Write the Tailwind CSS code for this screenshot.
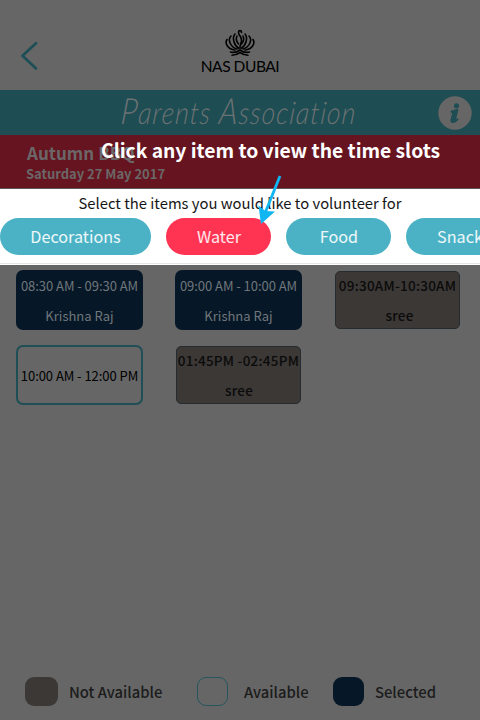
<!DOCTYPE html>
<html lang="en">
<head>
<meta charset="utf-8">
<title>Parents Association</title>
<script src="https://cdn.jsdelivr.net/npm/@tailwindcss/browser@4"></script>
</head>
<body class="relative flex h-[720px] w-[480px] flex-col overflow-hidden bg-[#666666] font-['Noto_Sans_CJK_SC','Open_Sans',sans-serif] whitespace-nowrap">
  <header class="grid h-[90px] shrink-0 grid-cols-[1fr_80px_1fr] text-black">
    <svg class="mt-[41px] ml-5 h-[30px] w-5" viewBox="0 0 20 30" fill="none" stroke="#1e4f56" stroke-width="2.8" stroke-linecap="round" stroke-linejoin="round"><path d="M16 2.2 2.5 14.7 16 27.4"/></svg>
    <div class="flex flex-col items-center pt-[29px]">
      <!-- lotus crest -->
      <svg class="h-[28px] w-[32px] shrink-0" viewBox="0 0 32 28" fill="none" stroke="#000" stroke-width="1.6" stroke-linecap="round">
        <path d="M17.5 3.500c0-2.500-3-2.500-3 0 0 3 3.500 4 3 8-.3 3-1.500 4-1.500 7"/>
        <path d="M13 7c-1.500 3-1 5 1.500 8M19 7c1.500 3 1 5-1.500 8"/>
        <path d="M15 19.500C9.500 16 8 8.500 11 5M17 19.500c5.500-3.500 7-11 4-14.500"/>
        <path d="M13 20C6 18 3.500 10.500 7 7M19 20c7-2 9.500-9.500 6-13"/>
        <path d="M11 21C4 20.500.5 14.500 3 10.500M21 21c7-.5 10.500-6.500 8-10.500"/>
        <path d="M6.500 23c4 1.200 7-.3 9.500-2 2.500 1.700 5.500 3.200 9.500 2M8 26.300c4 0 5.500-1 8-2.800 2.500 1.800 4 2.800 8 2.800"/>
      </svg>
      <div class="text-[15.5px] leading-[18px] font-['Lato','Noto_Sans_CJK_SC',sans-serif] tracking-[-0.45px]">NAS DUBAI</div>
    </div>
  </header>

  <div class="grid h-[45px] shrink-0 grid-cols-[1fr_260px_1fr] items-center bg-[#1e4d53] text-[#6c7273]">
    <span></span>
    <h1 class="-mt-1 -ml-[9px] origin-center scale-x-[0.85] -skew-x-6 text-center font-['Lato',sans-serif] text-[31px] leading-[40px] font-light tracking-[1.3px] italic [font-variant-ligatures:none]"><span class="text-[36px]">P</span>arents <span class="text-[36px]">A</span>ssociation</h1>
    <svg class="mr-2 h-[34px] w-[34px] justify-self-end" viewBox="0 0 34 34"><circle cx="17" cy="17" r="16.7" fill="#666"/><circle cx="18.5" cy="9.8" r="2.6" fill="#1e4d53"/><path d="M13 15.200c2-.8 4-1.400 7-1.700l-2.400 9.600c-.2 1 .6.7 2-.5l.6.8c-2.600 2.800-4.600 3.600-6.300 3-1.300-.5-1.200-1.800-.8-3.300l1.800-6.400c-.6-.4-1.200-.4-2-.5z" fill="#1e4d53" stroke="#1e4d53" stroke-width="1"/></svg>
  </div>

  <section class="h-[54px] shrink-0 border-b border-[#5d5555] bg-[#66141f] pl-[26px] font-bold text-[#6b6768]">
    <h2 class="pt-[6px] pl-px text-[17px] leading-[24px] tracking-[0.05px]">Autumn BBQ</h2>
    <p class="text-[13px] leading-[18px] tracking-[-0.02px]">Saturday 27 May 2017</p>
  </section>

  <section class="flex h-[76px] shrink-0 flex-col bg-white">
    <p class="h-[29px] pt-[3px] text-center text-[14.8px] leading-[22px] text-[#161616]">Select the items you would like to volunteer for</p>
    <div class="flex gap-[15px] overflow-hidden text-[16.2px] leading-[37px] text-white/90">
      <div class="h-[37px] w-[151px] shrink-0 rounded-full bg-[#4bb2c5] text-center">Decorations</div>
      <div class="h-[37px] w-[105px] shrink-0 rounded-full bg-[#ff3352] pl-px text-center">Water</div>
      <div class="h-[37px] w-[105px] shrink-0 rounded-full bg-[#4bb2c5] pl-px text-center">Food</div>
      <div class="h-[37px] w-[114px] shrink-0 rounded-full bg-[#4bb2c5] pl-[31px]">Snacks</div>
    </div>
    <div class="mt-[8px] h-px shrink-0 bg-[#e5e5e5]"></div>
  </section>

  <main class="grid grid-cols-[127px_127px_127px] grid-rows-[60px_60px] gap-x-8 gap-y-[15px] pt-[5px] pl-4 text-center text-[13px] leading-[30px]">
    <div class="rounded-[7px] bg-[#061827] pt-px text-[#70767b]"><p class="tracking-[-0.05px]">08:30 AM - 09:30 AM</p><p>Krishna Raj</p></div>
    <div class="rounded-[7px] bg-[#061827] pt-px text-[#70767b]"><p class="tracking-[-0.05px]">09:00 AM - 10:00 AM</p><p>Krishna Raj</p></div>
    <div class="m-px rounded-[5px] border border-[#252b2e] bg-[#3b3836] text-[13.5px] font-medium tracking-[0.25px] text-[#0b0b0b]"><p class="-mx-2 -mt-0.5">09:30AM-10:30AM</p><p class="pl-1">sree</p></div>
    <div class="rounded-[7px] border-2 border-[#1e4f56] leading-[58px] text-black"><p class="-mx-2 tracking-[-0.05px]">10:00 AM - 12:00 PM</p></div>
    <div class="m-px rounded-[5px] border border-[#252b2e] bg-[#3b3836] text-[13.5px] font-medium tracking-[0.25px] text-[#0b0b0b]"><p class="-mx-2 -mt-0.5">01:45PM -02:45PM</p><p class="pl-px">sree</p></div>
  </main>

  <footer class="mt-auto mb-[14px] flex h-[29px] items-center text-[14.8px] leading-[29px] font-medium text-[#1c1c1c]">
    <span class="ml-[25px] h-[29px] w-[33px] rounded-[9px] bg-[#3b3836]"></span><span class="ml-[11px] w-[128px]">Not Available</span>
    <span class="h-[29px] w-[31px] rounded-[9px] border border-[#25565e]"></span><span class="ml-[16px] w-[89px]">Available</span>
    <span class="h-[29px] w-[31px] rounded-[9px] bg-[#061827]"></span><span class="ml-[11px]">Selected</span>
  </footer>

  <div class="absolute top-[135px] left-[101px] text-[19.3px] leading-[30px] font-bold tracking-[-0.02px] text-white">Click any item to view the time slots</div>
  <svg class="absolute top-[174px] left-[256px] h-[52px] w-[28px]" viewBox="0 0 28 52"><path d="M24 2 9.500 38" stroke="#10b6f2" stroke-width="2.8" fill="none"/><path d="M5 50 2.500 31.500 9.500 37 19 37.500Z" fill="#10b6f2"/></svg>
</body>
</html>
